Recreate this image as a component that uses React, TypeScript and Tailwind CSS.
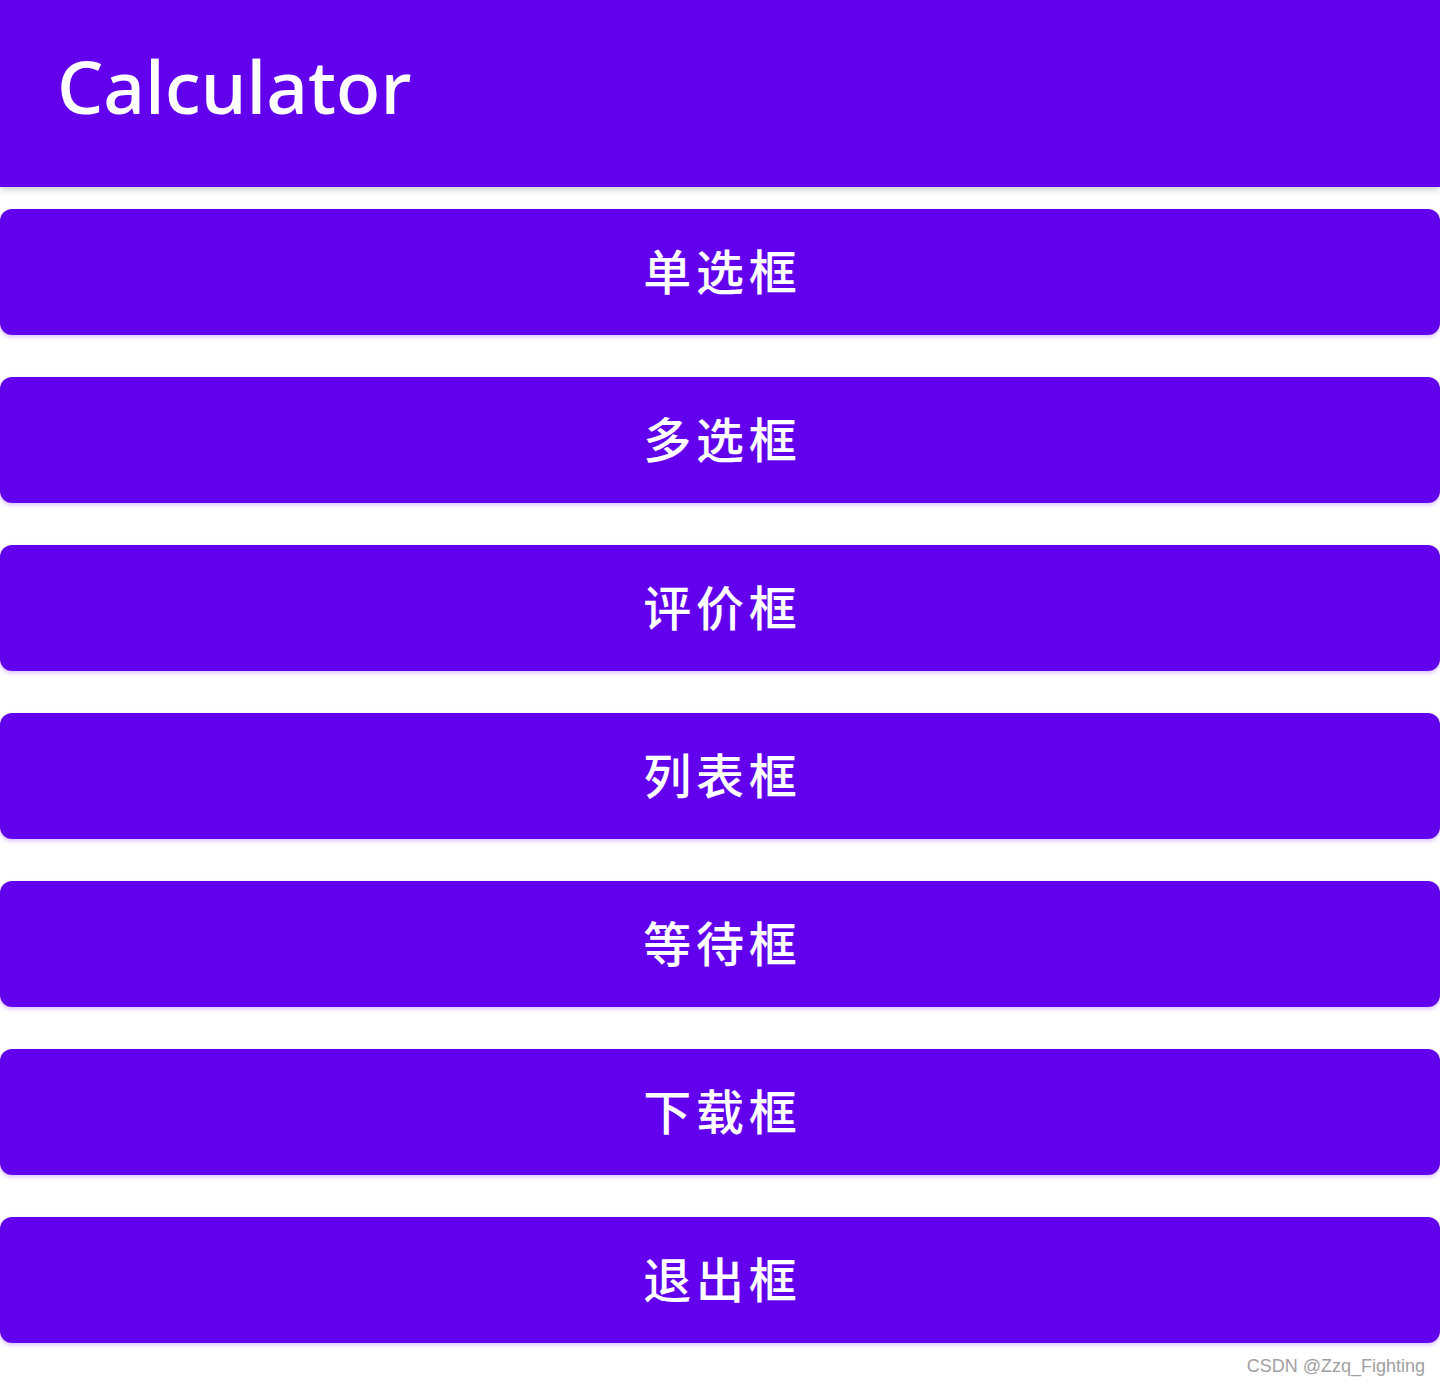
const items = ['单选框', '多选框', '评价框', '列表框', '等待框', '下载框', '退出框'];

export default function App() {
  return (
    <div className="relative min-h-[1386px] w-[1440px] bg-white" style={{ fontFamily: '"Noto Sans", "Noto Sans CJK SC", sans-serif' }}>
      <header className="h-[187px] bg-[#6200ee] shadow-[0_3px_6px_rgba(0,0,0,0.18)]">
        <h1 className="pl-[57px] pt-[34px] text-[73px] leading-[104px] font-medium text-white">Calculator</h1>
      </header>

      <div className="mt-[22px] flex flex-col gap-[42px]">
        {items.map((label) => (
          <button
            key={label}
            className="flex h-[126px] w-full items-center justify-center rounded-[12px] bg-[#6200ee] text-[48px] font-medium text-white shadow-[0_2px_4px_rgba(98,0,238,0.25)]"
          >
            <span className="pl-[0.1em] tracking-[0.1em]">{label}</span>
          </button>
        ))}
      </div>

      <div
        className="absolute bottom-[6px] right-[15px] text-[18px] text-[#a0a0a0]"
        style={{ fontFamily: '"Liberation Sans", sans-serif' }}
      >
        CSDN @Zzq_Fighting
      </div>
    </div>
  );
}
